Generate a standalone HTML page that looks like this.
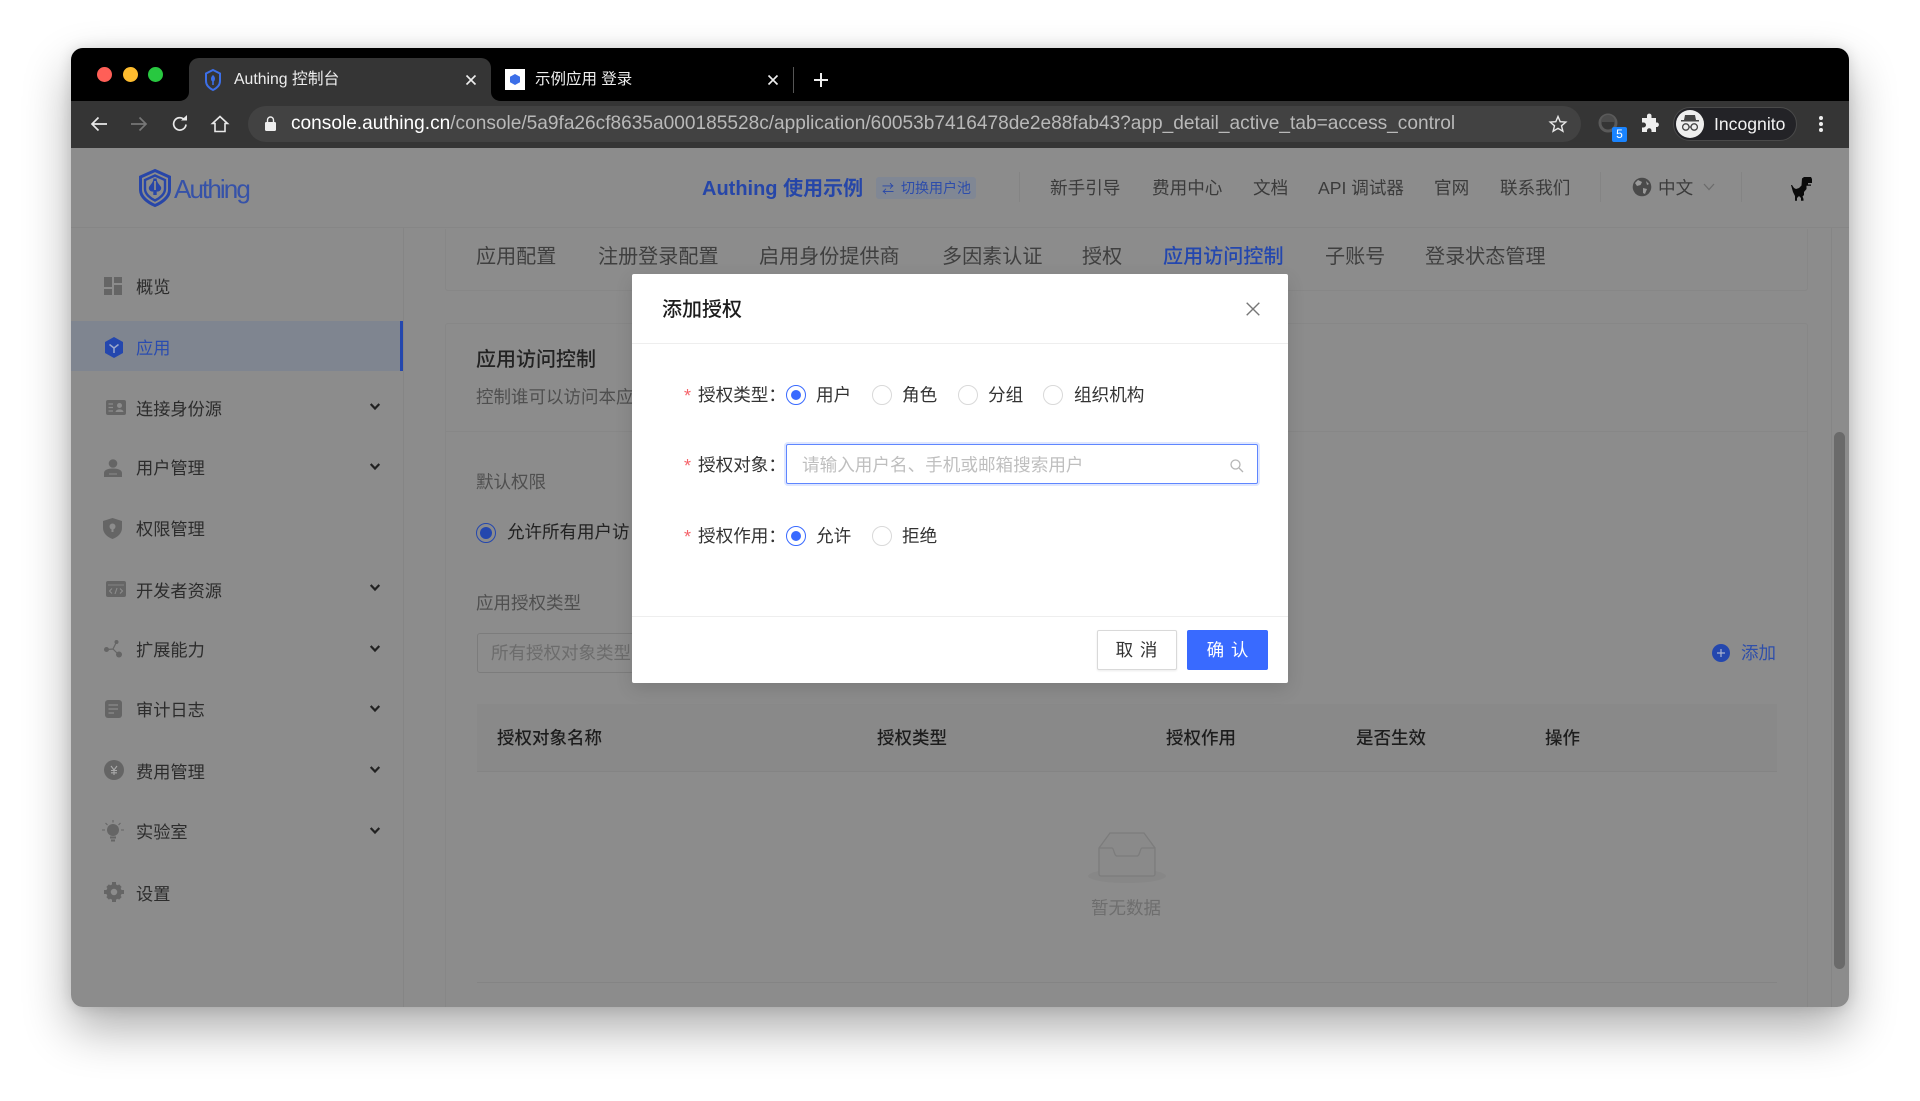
<!DOCTYPE html>
<html lang="zh"><head><meta charset="utf-8"><title>Authing</title>
<style>
*{box-sizing:border-box}
html,body{margin:0;width:1920px;height:1101px;overflow:hidden;background:#fff;font-family:"Liberation Sans","Noto Sans CJK SC",sans-serif}
.a{position:absolute}
.t{position:absolute;white-space:nowrap;line-height:24px;height:24px}
svg{position:absolute;overflow:visible}
#win{position:absolute;left:71px;top:48px;width:1778px;height:959px;border-radius:12px;box-shadow:0 22px 48px rgba(0,0,0,.32),0 0 14px rgba(0,0,0,.12)}
#inner{position:absolute;left:0;top:0;width:1920px;height:1101px;background:#8c8c8c;clip-path:inset(48px 71px 94px 71px round 12px)}
.nav{font-size:17.6px;color:#3b3b3b}
.tab{font-size:20px;color:#3f3f3f}
.m{font-size:17.2px;color:#2c2c2c}
.lab{font-size:17.5px;color:#4f4f4f}
.th{font-size:17.5px;color:#1d1d1d;font-weight:500}
.ml{font-size:17.6px;color:#333}
.req{font-size:18px;color:#f5636a}
.r{position:absolute;width:20px;height:20px;border-radius:50%;border:1.5px solid #d9d9d9;background:#fff}
.r.on{border-color:#396aff}
.r.on:after{content:"";position:absolute;left:3.5px;top:3.5px;width:10px;height:10px;border-radius:50%;background:#396aff}
.ch{fill:none;stroke:#222;stroke-width:2.2}
.ic{fill:#656565}
</style></head><body>
<div id="win"></div>
<div id="inner">
 <!-- chrome -->
 <div class="a" style="left:71px;top:48px;width:1778px;height:53px;background:#000"></div>
 <div class="a" style="left:71px;top:101px;width:1778px;height:47px;background:#353535"></div>
 <div class="a" style="left:97px;top:67px;width:15px;height:15px;border-radius:50%;background:#ff5f57"></div>
 <div class="a" style="left:123px;top:67px;width:15px;height:15px;border-radius:50%;background:#febc2e"></div>
 <div class="a" style="left:148px;top:67px;width:15px;height:15px;border-radius:50%;background:#28c840"></div>
 <svg style="left:179px;top:58px" width="322" height="43" viewBox="0 0 322 43"><path d="M0 43C6 43 10 39 10 34V10A10 10 0 0 1 20 0H302A10 10 0 0 1 312 10V34C312 39 316 43 322 43Z" fill="#353535"/></svg>
 <svg style="left:205px;top:69px" width="16" height="22" viewBox="0 0 16 22"><path d="M8 1L15 4.5V12C15 16 12 19 8 21C4 19 1 16 1 12V4.5Z" fill="none" stroke="#3c6fe8" stroke-width="2"/><path d="M8 6C10.5 8 10.500 11 8.800 12.500V16H7.200V12.500C5.500 11 5.500 8 8 6Z" fill="#3c6fe8"/></svg>
 <div class="t" style="left:234px;top:68px;font-size:15.8px;color:#eee">Authing 控制台</div>
 <svg style="left:466px;top:75px" width="10" height="10"><path d="M.5.5L9.500 9.500M9.500.5L.5 9.500" stroke="#eee" stroke-width="1.6"/></svg>
 <div class="a" style="left:505px;top:69px;width:20px;height:21px;background:#fff"></div>
 <svg style="left:510px;top:74px" width="10" height="11" viewBox="0 0 10 11"><path d="M5 0L10 2.700V8.300L5 11L0 8.300V2.700Z" fill="#3c6fe8"/></svg>
 <div class="t" style="left:535px;top:68px;font-size:15.5px;color:#eee">示例应用 登录</div>
 <svg style="left:768px;top:75px" width="10" height="10"><path d="M.5.5L9.500 9.500M9.500.5L.5 9.500" stroke="#eee" stroke-width="1.6"/></svg>
 <div class="a" style="left:793px;top:67px;width:1px;height:26px;background:#555"></div>
 <svg style="left:814px;top:73px" width="14" height="14"><path d="M7 0V14M0 7H14" stroke="#eee" stroke-width="2"/></svg>
 <svg style="left:90px;top:116px" width="18" height="16"><path d="M17 8H2M8.500 1.500L2 8L8.500 14.500" fill="none" stroke="#e8e8e8" stroke-width="1.700"/></svg>
 <svg style="left:130px;top:116px" width="18" height="16"><path d="M1 8H16M9.500 1.500L16 8L9.500 14.500" fill="none" stroke="#777" stroke-width="1.700"/></svg>
 <svg style="left:171px;top:115px" width="18" height="18" viewBox="0 0 18 18"><path d="M15 9.500A6.200 6.200 0 1 1 13 4.300" fill="none" stroke="#e8e8e8" stroke-width="1.700"/><path d="M10 5.500H16V0Z" fill="#e8e8e8"/></svg>
 <svg style="left:211px;top:115px" width="18" height="18" viewBox="0 0 18 18"><path d="M9 1.500L1.500 8.500H4V16.500H14V8.500H16.500Z" fill="none" stroke="#e8e8e8" stroke-width="1.600"/></svg>
 <div class="a" style="left:248px;top:106px;width:1333px;height:36px;border-radius:18px;background:#424242"></div>
 <svg style="left:265px;top:116px" width="11" height="15" viewBox="0 0 11 15"><path d="M2.500 6V4A3 3 0 0 1 8.500 4V6" fill="none" stroke="#eee" stroke-width="1.400"/><rect y="6" width="11" height="9" rx="1.200" fill="#eee"/></svg>
 <div class="t" style="left:291px;top:112px;font-size:19.1px;color:#b9b9b9"><span style="color:#fff">console.authing.cn</span>/console/5a9fa26cf8635a000185528c/application/60053b7416478de2e88fab43?app_detail_active_tab=access_control</div>
 <svg style="left:1549px;top:115px" width="18" height="18" viewBox="0 0 18 18"><path d="M9 1.500L11.200 6.700L16.800 7.100L12.500 10.800L13.900 16.300L9 13.300L4.100 16.300L5.500 10.800L1.200 7.100L6.800 6.700Z" fill="none" stroke="#e8e8e8" stroke-width="1.400"/></svg>
 <svg style="left:1598px;top:113px" width="20" height="20"><circle cx="10" cy="10" r="8" fill="none" stroke="#5a5a5a" stroke-width="3"/><path d="M3 9A7 7 0 0 1 17 9Z" fill="#4c4c4c"/></svg>
 <div class="a" style="left:1612px;top:127px;width:15px;height:15px;background:#1a84ff;border-radius:2px;color:#fff;font-size:12px;line-height:15px;text-align:center">5</div>
 <svg style="left:1640px;top:114px" width="19" height="19" viewBox="0 0 19 19"><path d="M7 1.500A2.300 2.300 0 0 1 11.500 1.500V4H16V8.500H17.500A2.500 2.500 0 0 1 17.500 13H16V18H11.500V16.500A2.200 2.200 0 0 0 7 16.500V18H2V13.500H3.500A2.500 2.500 0 0 0 3.500 8.500H2V4H7Z" fill="#eee"/></svg>
 <div class="a" style="left:1673px;top:107px;width:124px;height:34px;border-radius:17px;background:#232327;border:1px solid #4a4a4a"></div>
 <div class="a" style="left:1676px;top:110px;width:28px;height:28px;border-radius:50%;background:#eee"></div>
 <svg style="left:1680px;top:114px" width="20" height="20" viewBox="0 0 20 20"><path d="M5 1H15L16 6H19V7.500H1V6H4Z" fill="#444"/><circle cx="5.800" cy="13" r="3.200" fill="none" stroke="#444" stroke-width="1.300"/><circle cx="14.200" cy="13" r="3.200" fill="none" stroke="#444" stroke-width="1.300"/><path d="M9 13H11" stroke="#444" stroke-width="1.300"/></svg>
 <div class="t" style="left:1714px;top:112px;font-size:17.6px;color:#f2f2f2">Incognito</div>
 <div class="a" style="left:1819px;top:116px;width:4px;height:4px;border-radius:50%;background:#eee"></div>
 <div class="a" style="left:1819px;top:122px;width:4px;height:4px;border-radius:50%;background:#eee"></div>
 <div class="a" style="left:1819px;top:128px;width:4px;height:4px;border-radius:50%;background:#eee"></div>

 <!-- header -->
 <div class="a" style="left:71px;top:148px;width:1778px;height:80px;background:#8c8c8c;border-bottom:1px solid #868686"></div>
 <svg style="left:139px;top:169px" width="32" height="38" viewBox="0 0 32 38"><path d="M16 1.500L30.500 8V21C30.500 28 23 33.500 16 36.500C9 33.500 1.500 28 1.500 21V8Z" fill="none" stroke="#2846a8" stroke-width="3"/><path d="M16 6.500L26 11V20C26 25 20.500 29.500 16 31.500C11.500 29.500 6 25 6 20V11Z" fill="none" stroke="#2846a8" stroke-width="2.400"/><path d="M14.300 9.500C14.500 13 12 15 10 18C9 21 12 23 14.300 22.500V26H17.700V22.500C20 23 23 21 22 18C20 15 17.500 13 17.700 9.500Z" fill="#2846a8"/><path d="M16 12V21" stroke="#8c8c8c" stroke-width="1.800"/></svg>
 <div class="t" style="left:174px;top:177px;font-size:26px;color:#3652a8;letter-spacing:-1.900px">Authing</div>
 <div class="t" style="left:702px;top:177px;font-size:20px;font-weight:700;color:#2646a8">Authing 使用示例</div>
 <div class="a" style="left:876px;top:177px;width:100px;height:22px;border-radius:3px;background:#808794"></div>
 <div class="t" style="left:882px;top:177px;font-size:12px;color:#2646a8">⇄</div>
 <div class="t" style="left:901px;top:176px;font-size:14px;color:#2c4cab">切换用户池</div>
 <div class="a" style="left:1019px;top:172px;width:1px;height:30px;background:#848484"></div>
 <div class="t nav" style="left:1050px;top:176px">新手引导</div>
 <div class="t nav" style="left:1152px;top:176px">费用中心</div>
 <div class="t nav" style="left:1253px;top:176px">文档</div>
 <div class="t nav" style="left:1318px;top:176px">API 调试器</div>
 <div class="t nav" style="left:1434px;top:176px">官网</div>
 <div class="t nav" style="left:1500px;top:176px">联系我们</div>
 <div class="a" style="left:1600px;top:172px;width:1px;height:30px;background:#848484"></div>
 <svg style="left:1632px;top:177px" width="20" height="20" viewBox="0 0 20 20"><circle cx="10" cy="10" r="9.300" fill="#4a4a4a"/><path d="M6 3L10 5L8.500 8L5 9L3 6ZM11 11L15 12L13 17L11 16ZM14 4L17 7L15 8Z" fill="#9a9a9a"/></svg>
 <div class="t nav" style="left:1658px;top:176px">中文</div>
 <svg style="left:1703px;top:183px" width="12" height="8"><path d="M1 1L6 6.500L11 1" fill="none" stroke="#6c6c6c" stroke-width="1.300"/></svg>
 <div class="a" style="left:1741px;top:172px;width:1px;height:30px;background:#848484"></div>
 <svg style="left:1791px;top:177px" width="21" height="24" viewBox="0 0 21 24"><path d="M11 1.500L13 0H20L21 2V6H17V7.500H20V8.800H15.500V12L13 15V18L11.500 19.500L12.500 22V23.800H10V21L8 19L6 21V23.800H4V19L2 15L0 8H1L3 11L5 12L8 11L10.500 8.500Z" fill="#0a0a0a"/></svg>

 <!-- sidebar -->
 <div class="a" style="left:403px;top:228px;width:1px;height:779px;background:#858585"></div>
 <div class="a" style="left:71px;top:321px;width:332px;height:50px;background:#7f8590"></div>
 <div class="a" style="left:400px;top:321px;width:3px;height:50px;background:#2447ae"></div>

 <svg class="ic" style="left:104px;top:277px" width="18" height="18"><rect width="8" height="10"/><rect x="10" width="8" height="6"/><rect y="12" width="8" height="6"/><rect x="10" y="8" width="8" height="10"/></svg>
 <div class="t m" style="left:136px;top:275px">概览</div>
 <svg style="left:104px;top:337px" width="20" height="21" viewBox="0 0 20 21"><path d="M10 0L19 5V16L10 21L1 16V5Z" fill="#2447ae"/><path d="M5.500 7.500L10 11L14.500 7.500M10 11V16" fill="none" stroke="#9aa7cc" stroke-width="1.500"/></svg>
 <div class="t m" style="left:136px;top:336px;color:#2a4cb0">应用</div>

 <svg class="ic" style="left:106px;top:400px" width="20" height="16" viewBox="0 0 20 16"><rect width="20" height="15" rx="2"/><path d="M2.500 4H7M2.500 7.500H7M2.500 11H7" stroke="#8c8c8c" stroke-width="1.300"/><circle cx="13.500" cy="5.500" r="2.500" fill="#8c8c8c"/><path d="M9.500 12C10 8.500 17 8.500 17.500 12Z" fill="#8c8c8c"/></svg>
 <div class="t m" style="left:136px;top:397px">连接身份源</div>
 <svg class="ch" style="left:370px;top:403px" width="10" height="7"><path d="M.7 1L5 5.500L9.300 1"/></svg>

 <svg class="ic" style="left:104px;top:459px" width="18" height="18" viewBox="0 0 18 18"><circle cx="9" cy="4.500" r="4.300"/><path d="M0 18V14C0 11 4 9.500 9 9.500S18 11 18 14V18ZM5 14.500V15.500H13V14.500Z" fill-rule="evenodd"/></svg>
 <div class="t m" style="left:136px;top:456px">用户管理</div>
 <svg class="ch" style="left:370px;top:463px" width="10" height="7"><path d="M.7 1L5 5.500L9.300 1"/></svg>

 <svg class="ic" style="left:103px;top:518px" width="19" height="21" viewBox="0 0 19 21"><path d="M9.500 0L19 3V10C19 15 15 19 9.500 21C4 19 0 15 0 10V3Z"/><circle cx="9.500" cy="8.500" r="3" fill="#8c8c8c"/><path d="M8.500 10H10.500V14H8.500Z" fill="#8c8c8c"/></svg>
 <div class="t m" style="left:136px;top:517px">权限管理</div>

 <svg class="ic" style="left:106px;top:581px" width="20" height="17" viewBox="0 0 20 17"><rect width="20" height="16" rx="2"/><path d="M2 4H18" stroke="#8c8c8c" stroke-width=".8"/><path d="M6 7.500L3.500 10L6 12.500M14 7.500L16.500 10L14 12.500M11 7L9 13" fill="none" stroke="#8c8c8c" stroke-width="1.100"/></svg>
 <div class="t m" style="left:136px;top:579px">开发者资源</div>
 <svg class="ch" style="left:370px;top:584px" width="10" height="7"><path d="M.7 1L5 5.500L9.300 1"/></svg>

 <svg class="ic" style="left:104px;top:640px" width="18" height="18" viewBox="0 0 18 18"><circle cx="2.500" cy="9.500" r="2.500"/><circle cx="12.500" cy="2" r="2"/><circle cx="15" cy="14.500" r="3"/><path d="M3 9.500L9 9L12 3M9 9L14 14" fill="none" stroke="#656565" stroke-width="1.200"/></svg>
 <div class="t m" style="left:136px;top:638px">扩展能力</div>
 <svg class="ch" style="left:370px;top:645px" width="10" height="7"><path d="M.7 1L5 5.500L9.300 1"/></svg>

 <svg class="ic" style="left:105px;top:700px" width="17" height="18" viewBox="0 0 17 18"><path d="M3 0H14A3 3 0 0 1 17 3V15A3 3 0 0 1 14 18H3A3 3 0 0 1 0 15V3A3 3 0 0 1 3 0Z"/><path d="M3.500 5H13M3.500 9H13M3.500 13H9" stroke="#8c8c8c" stroke-width="1.300"/></svg>
 <div class="t m" style="left:136px;top:698px">审计日志</div>
 <svg class="ch" style="left:370px;top:705px" width="10" height="7"><path d="M.7 1L5 5.500L9.300 1"/></svg>

 <svg class="ic" style="left:104px;top:760px" width="20" height="20"><circle cx="10" cy="10" r="10"/><path d="M7 6L10 10L13 6M10 10V15M7 10.500H13M7 12.800H13" fill="none" stroke="#aaa" stroke-width="1.100"/></svg>
 <div class="t m" style="left:136px;top:760px">费用管理</div>
 <svg class="ch" style="left:370px;top:766px" width="10" height="7"><path d="M.7 1L5 5.500L9.300 1"/></svg>

 <svg class="ic" style="left:102px;top:820px" width="22" height="24" viewBox="0 0 22 24"><circle cx="11" cy="10" r="6"/><rect x="8" y="16.500" width="6" height="2"/><rect x="9" y="19.500" width="4" height="2"/><path d="M11 0V2.500M0 10H3M19 10H22M3.500 3L5.500 5M18.500 3L16.500 5" stroke="#656565" stroke-width="1.100"/></svg>
 <div class="t m" style="left:136px;top:820px">实验室</div>
 <svg class="ch" style="left:370px;top:827px" width="10" height="7"><path d="M.7 1L5 5.500L9.300 1"/></svg>

 <svg class="ic" style="left:104px;top:882px" width="20" height="20" viewBox="0 0 20 20"><circle cx="10" cy="10" r="5.500" fill="none" stroke="#656565" stroke-width="4.500"/><path d="M8 0H12V3H8ZM8 17H12V20H8ZM0 8H3V12H0ZM17 8H20V12H17ZM2.300 5L5 2.300L7 4.500L4.500 7ZM15 17.700L17.700 15L15.500 13L13 15.500ZM2.300 15L5 17.700L7 15.500L4.500 13ZM15 2.300L17.700 5L15.500 7L13 4.500Z"/></svg>
 <div class="t m" style="left:136px;top:882px">设置</div>

 <!-- tabs card -->
 <div class="a" style="left:445px;top:229px;width:1363px;height:62px;border:1px solid #878787;border-top:0;border-radius:0 0 3px 3px;background:#8c8c8c"></div>
 <div class="t tab" style="left:476px;top:245px;font-size:20.1px">应用配置</div>
 <div class="t tab" style="left:598px;top:245px;font-size:20.1px">注册登录配置</div>
 <div class="t tab" style="left:759px;top:245px;font-size:20.1px">启用身份提供商</div>
 <div class="t tab" style="left:942px;top:245px;font-size:20.1px">多因素认证</div>
 <div class="t tab" style="left:1082px;top:245px;font-size:20.1px">授权</div>
 <div class="t tab" style="left:1163px;top:245px;font-size:20.1px;color:#2447ae;font-weight:500">应用访问控制</div>
 <div class="t tab" style="left:1325px;top:245px;font-size:20.1px">子账号</div>
 <div class="t tab" style="left:1425px;top:245px;font-size:20.1px">登录状态管理</div>

 <!-- main card -->
 <div class="a" style="left:445px;top:323px;width:1363px;height:690px;border:1px solid #878787;border-radius:3px"></div>
 <div class="a" style="left:446px;top:431px;width:1361px;height:1px;background:#878787"></div>
 <div class="t" style="left:476px;top:348px;font-size:20px;color:#222;font-weight:500">应用访问控制</div>
 <div class="t lab" style="left:476px;top:385px">控制谁可以访问本应用</div>
 <div class="t lab" style="left:476px;top:470px">默认权限</div>
 <div class="a" style="left:476px;top:523px;width:20px;height:20px;border-radius:50%;border:1.500px solid #2447ae"></div>
 <div class="a" style="left:480px;top:527px;width:12px;height:12px;border-radius:50%;background:#2447ae"></div>
 <div class="t" style="left:507px;top:520px;font-size:17.500px;color:#222">允许所有用户访</div>
 <div class="t lab" style="left:476px;top:591px">应用授权类型</div>
 <div class="a" style="left:477px;top:633px;width:180px;height:40px;border:1px solid #7c7c7c;border-radius:3px"></div>
 <div class="t" style="left:491px;top:641px;font-size:17.500px;color:#6c6c6c">所有授权对象类型</div>
 <svg style="left:1712px;top:644px" width="18" height="18"><circle cx="9" cy="9" r="9" fill="#2447ae"/><path d="M9 5V13M5 9H13" stroke="#aab4d0" stroke-width="1.200"/></svg>
 <div class="t" style="left:1741px;top:641px;font-size:17.500px;color:#2f4faa">添加</div>
 <div class="a" style="left:477px;top:704px;width:1300px;height:68px;background:#898989;border-bottom:1px solid #848484"></div>
 <div class="t th" style="left:497px;top:726px">授权对象名称</div>
 <div class="t th" style="left:877px;top:726px">授权类型</div>
 <div class="t th" style="left:1166px;top:726px">授权作用</div>
 <div class="t th" style="left:1356px;top:726px">是否生效</div>
 <div class="t th" style="left:1545px;top:726px">操作</div>
 <svg style="left:1088px;top:832px" width="78" height="52" viewBox="0 0 78 52"><ellipse cx="39" cy="44" rx="39" ry="7" fill="#878787"/><path d="M11 16L22 1H56L67 16V42A2 2 0 0 1 65 44H13A2 2 0 0 1 11 42Z" fill="#8a8a8a" stroke="#7c7c7c" stroke-width="1.300"/><path d="M11 16H24C26 16 26 24 29 24H49C52 24 52 16 54 16H67" fill="none" stroke="#7c7c7c" stroke-width="1.300"/></svg>
 <div class="t" style="left:1091px;top:896px;font-size:17.500px;color:#6e6e6e">暂无数据</div>
 <div class="a" style="left:477px;top:982px;width:1300px;height:1px;background:#848484"></div>

 <!-- scrollbar -->
 <div class="a" style="left:1831px;top:228px;width:1px;height:779px;background:#858585"></div>
 <div class="a" style="left:1834px;top:432px;width:11px;height:537px;border-radius:6px;background:#6a6a6a"></div>

 <!-- modal -->
 <div class="a" style="left:632px;top:274px;width:656px;height:409px;background:#fff;border-radius:2px;box-shadow:0 6px 18px rgba(0,0,0,.12)"></div>
 <div class="t" style="left:662px;top:298px;font-size:20px;color:#1d1d1d;font-weight:500">添加授权</div>
 <svg style="left:1246px;top:302px" width="14" height="14"><path d="M.7.7L13.300 13.300M13.300.7L.7 13.300" stroke="#777" stroke-width="1.400"/></svg>
 <div class="a" style="left:632px;top:343px;width:656px;height:1px;background:#eee"></div>

 <div class="t req" style="left:684px;top:384px">*</div>
 <div class="t ml" style="left:698px;top:383px">授权类型：</div>
 <div class="r on" style="left:786px;top:385px"></div>
 <div class="t ml" style="left:816px;top:383px">用户</div>
 <div class="r" style="left:872px;top:385px"></div>
 <div class="t ml" style="left:902px;top:383px">角色</div>
 <div class="r" style="left:958px;top:385px"></div>
 <div class="t ml" style="left:988px;top:383px">分组</div>
 <div class="r" style="left:1043px;top:385px"></div>
 <div class="t ml" style="left:1074px;top:383px">组织机构</div>

 <div class="t req" style="left:684px;top:454px">*</div>
 <div class="t ml" style="left:698px;top:453px">授权对象：</div>
 <div class="a" style="left:786px;top:444px;width:472px;height:40px;border:1.500px solid #5f86ff;border-radius:2px;box-shadow:0 0 0 2px rgba(57,106,255,.16)"></div>
 <div class="t" style="left:802px;top:453px;font-size:17.600px;color:#bfbfbf">请输入用户名、手机或邮箱搜索用户</div>
 <svg style="left:1230px;top:459px" width="14" height="14"><circle cx="5.500" cy="5.500" r="4.500" fill="none" stroke="#b5b5b5" stroke-width="1.300"/><path d="M9 9L13 13" stroke="#b5b5b5" stroke-width="1.300"/></svg>

 <div class="t req" style="left:684px;top:525px">*</div>
 <div class="t ml" style="left:698px;top:524px">授权作用：</div>
 <div class="r on" style="left:786px;top:526px"></div>
 <div class="t ml" style="left:816px;top:524px">允许</div>
 <div class="r" style="left:872px;top:526px"></div>
 <div class="t ml" style="left:902px;top:524px">拒绝</div>

 <div class="a" style="left:632px;top:616px;width:656px;height:1px;background:#eee"></div>
 <div class="a" style="left:1097px;top:630px;width:80px;height:40px;border:1px solid #d9d9d9;border-radius:2px;background:#fff;box-shadow:0 1px 2px rgba(0,0,0,.08);text-align:center;line-height:39px;font-size:17.500px;color:#333;letter-spacing:1px">取 消</div>
 <div class="a" style="left:1187px;top:630px;width:81px;height:40px;border-radius:2px;background:#396aff;text-align:center;line-height:41px;font-size:17.500px;color:#fff;letter-spacing:1px;padding-left:1px">确 认</div>
</div>
</body></html>
